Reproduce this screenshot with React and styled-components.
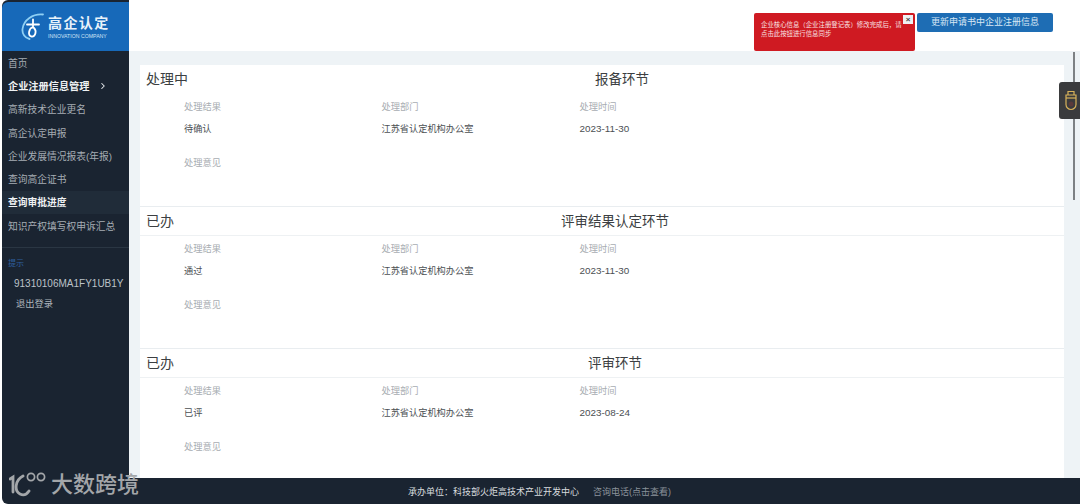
import React from "react";
import styled, { createGlobalStyle } from "styled-components";
import { ChevronRight } from "lucide-react";

const Global = createGlobalStyle`
  html, body { margin: 0; padding: 0; width: 1080px; height: 504px; overflow: hidden; background: #ffffff; }
  body { font-family: "Liberation Sans", "Noto Sans CJK SC", sans-serif; }
  * { box-sizing: border-box; }
`;

const Page = styled.div`
  position: relative; width: 1080px; height: 504px; display: flex; flex-direction: column; overflow: hidden;
  background: #ffffff; padding-left: 2px;
`;
const Top = styled.div`display: flex; height: 478px; min-height: 0;`;
const Sidebar = styled.aside`
  width: 127px; flex: none; padding-top: 2px; background: #1a2431;
  border-radius: 6px 0 0 0; overflow: hidden; display: flex; flex-direction: column;
`;
const LogoBar = styled.div`
  height: 49px; flex: none; background: #1769b9; display: flex; align-items: center; gap: 4px; padding: 0 0 0 19px;
  border-radius: 6px 0 0 0;
`;
const LogoText = styled.div`display: flex; flex-direction: column; color: #e8f2fa; gap: 1px; margin-left: -1px;`;
const LogoTitle = styled.div`font-size: 14px; line-height: 17px; font-weight: 700; letter-spacing: 1.4px; white-space: nowrap;`;
const LogoSub = styled.div`font-size: 5.2px; line-height: 6px; color: #cfe3f5; white-space: nowrap;`;
const Nav = styled.nav`display: flex; flex-direction: column;`;
const NavItem = styled.div`
  height: 23.3px; display: flex; align-items: center; gap: 8px; padding-left: 6px; white-space: nowrap;
  font-size: ${p => (p.$parent ? "10.2px" : "9.75px")};
  color: ${p => (p.$active ? "#eef1f3" : "#a6adb4")};
  font-weight: ${p => (p.$active ? 700 : 400)};
  background: ${p => (p.$current ? "#202c39" : "transparent")};
`;
const Chevron = styled(ChevronRight)`color: #eef1f3; flex: none;`;
const NavDivider = styled.div`height: 1px; background: #2a3643; margin-top: 10px;`;
const Hint = styled.div`color: #2f5f9f; font-size: 8px; padding: 11px 0 0 6px; line-height: 10px;`;
const Account = styled.div`color: #bcc2c8; font-size: 10px; padding: 8px 0 0 12px; line-height: 14px; white-space: nowrap;`;
const Logout = styled.div`color: #aeb5bc; font-size: 9.25px; padding: 6px 0 0 14px; line-height: 14px;`;

const Main = styled.main`flex: 1; min-width: 0; display: flex; flex-direction: column; background: #eef3f6;`;
const Header = styled.header`
  height: 51px; flex: none; background: #fff; display: flex; justify-content: flex-end; align-items: flex-start;
  padding: 13px 27px 0 0;
`;
const Alert = styled.div`
  position: relative; width: 161px; height: 38px; background: #cf1a22; border-radius: 2px; color: #f8e2e2; font-size: 6.4px;
  line-height: 9px; padding: 7px 11px 0 7px; margin-right: 2px;
`;
const CloseBox = styled.span`
  position: absolute; top: 2px; right: 2px; width: 10px; height: 9px; background: #eef0f2; color: #444; font-size: 8px;
  font-weight: 700; line-height: 9px; text-align: center;
`;
const UpdateButton = styled.button`
  width: 136px; height: 19px; border: 0; background: #1e6db4; border-radius: 2px; color: #d9e8f5;
  font: 9px/19px "Liberation Sans", "Noto Sans CJK SC", sans-serif; padding: 0;
`;
const Content = styled.div`flex: 1; min-height: 0; padding: 14px 16px 0 11px; overflow: hidden;`;
const Panel = styled.div`background: #fff; height: 100%; overflow: hidden;`;
const Section = styled.section`height: 142px; border-bottom: 1px solid #e9edf0;`;
const SectionHead = styled.div`
  height: 29px; position: relative; padding-left: 6px;
  border-bottom: ${p => (p.$line ? "1px solid #eef1f3" : "0")};
`;
const Status = styled.div`font-size: 14px; color: #3c3f42; line-height: 29px;`;
const Stage = styled.div`position: absolute; top: 0; left: ${p => p.$x}px; font-size: 13.5px; color: #3c3f42; line-height: 29px; white-space: nowrap;`;
const Fields = styled.div`display: grid; grid-template-columns: 197.5px 198px 1fr; padding: 7px 0 0 44px;`;
const Label = styled.div`font-size: 9.25px; line-height: 12px; color: #a8adb2;`;
const Value = styled.div`font-size: ${p => (p.$num ? "9.9px" : "9.2px")}; line-height: 12px; color: #4b4f53; margin-top: 10px;`;
const Opinion = styled.div`font-size: 9.25px; line-height: 12px; color: #a8adb2; padding: 22px 0 0 44px;`;

const ScrollThumb = styled.div`
  position: absolute; left: 1073px; top: 52px; width: 2px; height: 148px; background: #7d8184;
`;
const SideTab = styled.div`
  position: absolute; right: 0; top: 82px; width: 21px; height: 37px; background: #3a3b3d; border-radius: 3px 0 0 3px;
  display: flex; align-items: center; justify-content: center; padding-left: 3px;
`;
const Watermark = styled.div`
  position: absolute; left: 9px; bottom: 6px; display: flex; align-items: center; gap: 4px; color: #a3a6a9;
  font-size: 22px; font-weight: 500; line-height: 26px; white-space: nowrap;
`;
const Footer = styled.footer`
  height: 26px; flex: none; background: #1a2431; display: flex; align-items: center; font-size: 9px; padding-left: 406px; gap: 14px;
  white-space: nowrap; border-radius: 0 0 0 6px;
`;
const FooterMain = styled.span`color: #d8dcdf;`;
const FooterLink = styled.span`color: #8a929a;`;

const nav = [
  { t: "首页" },
  { t: "企业注册信息管理", a: true, c: true },
  { t: "高新技术企业更名" },
  { t: "高企认定申报" },
  { t: "企业发展情况报表(年报)" },
  { t: "查询高企证书" },
  { t: "查询审批进度", a: true, cur: true },
  { t: "知识产权填写权申诉汇总" },
];
const sections = [
  { s: "处理中", stage: "报备环节", x: 455, r: "待确认", d: "2023-11-30" },
  { s: "已办", stage: "评审结果认定环节", x: 421, r: "通过", d: "2023-11-30", line: true },
  { s: "已办", stage: "评审环节", x: 448, r: "已评", d: "2023-08-24", line: true },
];

const LogoMark = () => (
  <svg width="24" height="27" viewBox="0 0 24 27" fill="none">
    <path d="M22 1.5C12 .5 2.5 7 1.5 16c-.5 5 2.5 9 7 10" stroke="#8fd0f4" strokeWidth="1.8" strokeLinecap="round" />
    <path d="M6 11.5h12M12 6.5v8M12 14c-4.5 1.5-5.5 9-1.5 9.5s5.5-5.5 2.5-8.5" stroke="#fff" strokeWidth="1.8" strokeLinecap="round" />
  </svg>
);
const WatermarkMark = () => (
  <svg width="38" height="26" viewBox="0 0 38 26" fill="none" stroke="currentColor" strokeLinecap="round">
    <path d="M1 7l3-2v15" strokeWidth="2.8" />
    <path d="M14 4C6 8 5 19 11 22c4 2 7 0 9-3" strokeWidth="2.8" />
    <circle cx="22" cy="5" r="3.6" strokeWidth="1.7" />
    <circle cx="32" cy="5" r="3.6" strokeWidth="1.7" />
  </svg>
);
const UsbIcon = () => (
  <svg width="12" height="21" viewBox="0 0 12 21" fill="none" stroke="#d8b25a" strokeWidth="1.2">
    <path d="M3 5V1.5h6V5" />
    <path d="M1 5h10v9.5a5 5 0 0 1-10 0z" />
    <path d="M1 8h10" />
    <circle cx="6" cy="14" r="2.5" fill="#5a3a3a" stroke="none" />
  </svg>
);

export default function App() {
  return (
    <Page>
      <Global />
      <Top>
        <Sidebar>
          <LogoBar>
            <LogoMark />
            <LogoText>
              <LogoTitle>高企认定</LogoTitle>
              <LogoSub>INNOVATION COMPANY</LogoSub>
            </LogoText>
          </LogoBar>
          <Nav>
            {nav.map(n => (
              <NavItem key={n.t} $active={n.a} $current={n.cur} $parent={n.c}>
                {n.t}
                {n.c && <Chevron size={10} strokeWidth={2.5} />}
              </NavItem>
            ))}
          </Nav>
          <NavDivider />
          <Hint>提示</Hint>
          <Account>91310106MA1FY1UB1Y</Account>
          <Logout>退出登录</Logout>
        </Sidebar>
        <Main>
          <Header>
            <Alert>
              企业核心信息（企业注册登记表）修改完成后，请点击此按钮进行信息同步
              <CloseBox>×</CloseBox>
            </Alert>
            <UpdateButton>更新申请书中企业注册信息</UpdateButton>
          </Header>
          <Content>
            <Panel>
              {sections.map((s, i) => (
                <Section key={i}>
                  <SectionHead $line={s.line}>
                    <Status>{s.s}</Status>
                    <Stage $x={s.x}>{s.stage}</Stage>
                  </SectionHead>
                  <Fields>
                    <div>
                      <Label>处理结果</Label>
                      <Value>{s.r}</Value>
                    </div>
                    <div>
                      <Label>处理部门</Label>
                      <Value>江苏省认定机构办公室</Value>
                    </div>
                    <div>
                      <Label>处理时间</Label>
                      <Value $num>{s.d}</Value>
                    </div>
                  </Fields>
                  <Opinion>处理意见</Opinion>
                </Section>
              ))}
            </Panel>
          </Content>
        </Main>
      </Top>
      <Footer>
        <FooterMain>承办单位：科技部火炬高技术产业开发中心</FooterMain>
        <FooterLink>咨询电话(点击查看)</FooterLink>
      </Footer>
      <ScrollThumb />
      <SideTab><UsbIcon /></SideTab>
      <Watermark><WatermarkMark />大数跨境</Watermark>
    </Page>
  );
}
